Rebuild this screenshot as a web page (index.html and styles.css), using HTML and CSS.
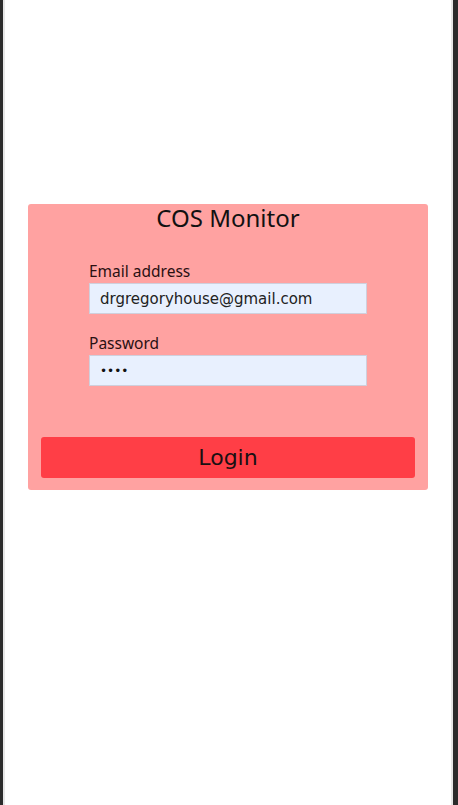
FILE: index.html
```html
<!DOCTYPE html>
<html>
<head>
<meta charset="utf-8">
<link rel="stylesheet" href="styles.css">
<title>COS Monitor</title>
</head>
<body>
<div class="frame">
  <div class="edge-left"></div>
  <main class="screen">
    <div class="card">
      <h1 class="title">COS Monitor</h1>
      <form class="form">
        <div class="field">
          <label class="label">Email address</label>
          <input class="input" type="text" value="drgregoryhouse@gmail.com">
        </div>
        <div class="field field-pw">
          <label class="label">Password</label>
          <input class="input input-pw" type="password" value="1234">
        </div>
        <button type="button" class="btn">Login</button>
      </form>
    </div>
  </main>
  <div class="edge-right"></div>
</div>
</body>
</html>
```
FILE: styles.css
```css
html, body {
  margin: 0;
  padding: 0;
  height: 100%;
  background: #fff;
}
.frame {
  display: flex;
  height: 805px;
  width: 458px;
}
.edge-left {
  width: 3px;
  background: #2b2b2b;
  border-right: 2px solid #e6e6e6;
}
.edge-right {
  width: 5px;
  background: #2b2b2b;
  border-left: 2px solid #e6e6e6;
}
.screen {
  flex: 1;
  display: flex;
  flex-direction: column;
  align-items: center;
  background: #fff;
}
.card {
  margin-top: 204px;
  width: 400px;
  box-sizing: border-box;
  background: #ffa2a1;
  border-radius: 3px;
  padding: 0 13px 12px;
}
.title {
  margin: 0;
  text-align: center;
  font-family: "Noto Sans", sans-serif;
  font-weight: 400;
  font-size: 24px;
  line-height: 28px;
  color: #111;
}
.form {
  display: flex;
  flex-direction: column;
}
.field {
  display: flex;
  flex-direction: column;
  margin: 29px 0 0 48px;
  width: 278px;
}
.field-pw {
  margin-top: 19px;
}
.label {
  font-family: "Noto Sans", sans-serif;
  font-size: 15.5px;
  line-height: 20px;
  color: #2a1012;
  margin-bottom: 2px;
}
.input {
  box-sizing: border-box;
  height: 31px;
  width: 278px;
  margin: 0;
  border: 1px solid #cfcfdc;
  background: #e8f0fe;
  padding: 0 10px;
  font-family: "DejaVu Sans", sans-serif;
  font-size: 15px;
  color: #222;
  outline: none;
}
.input-pw {
  font-size: 12px;
  color: #111;
}
.btn {
  margin-top: 51px;
  height: 41px;
  border: none;
  border-radius: 3px;
  background: #ff3e46;
  font-family: "DejaVu Sans", sans-serif;
  font-size: 22px;
  color: #1a1012;
  padding: 0;
  cursor: pointer;
}
```
